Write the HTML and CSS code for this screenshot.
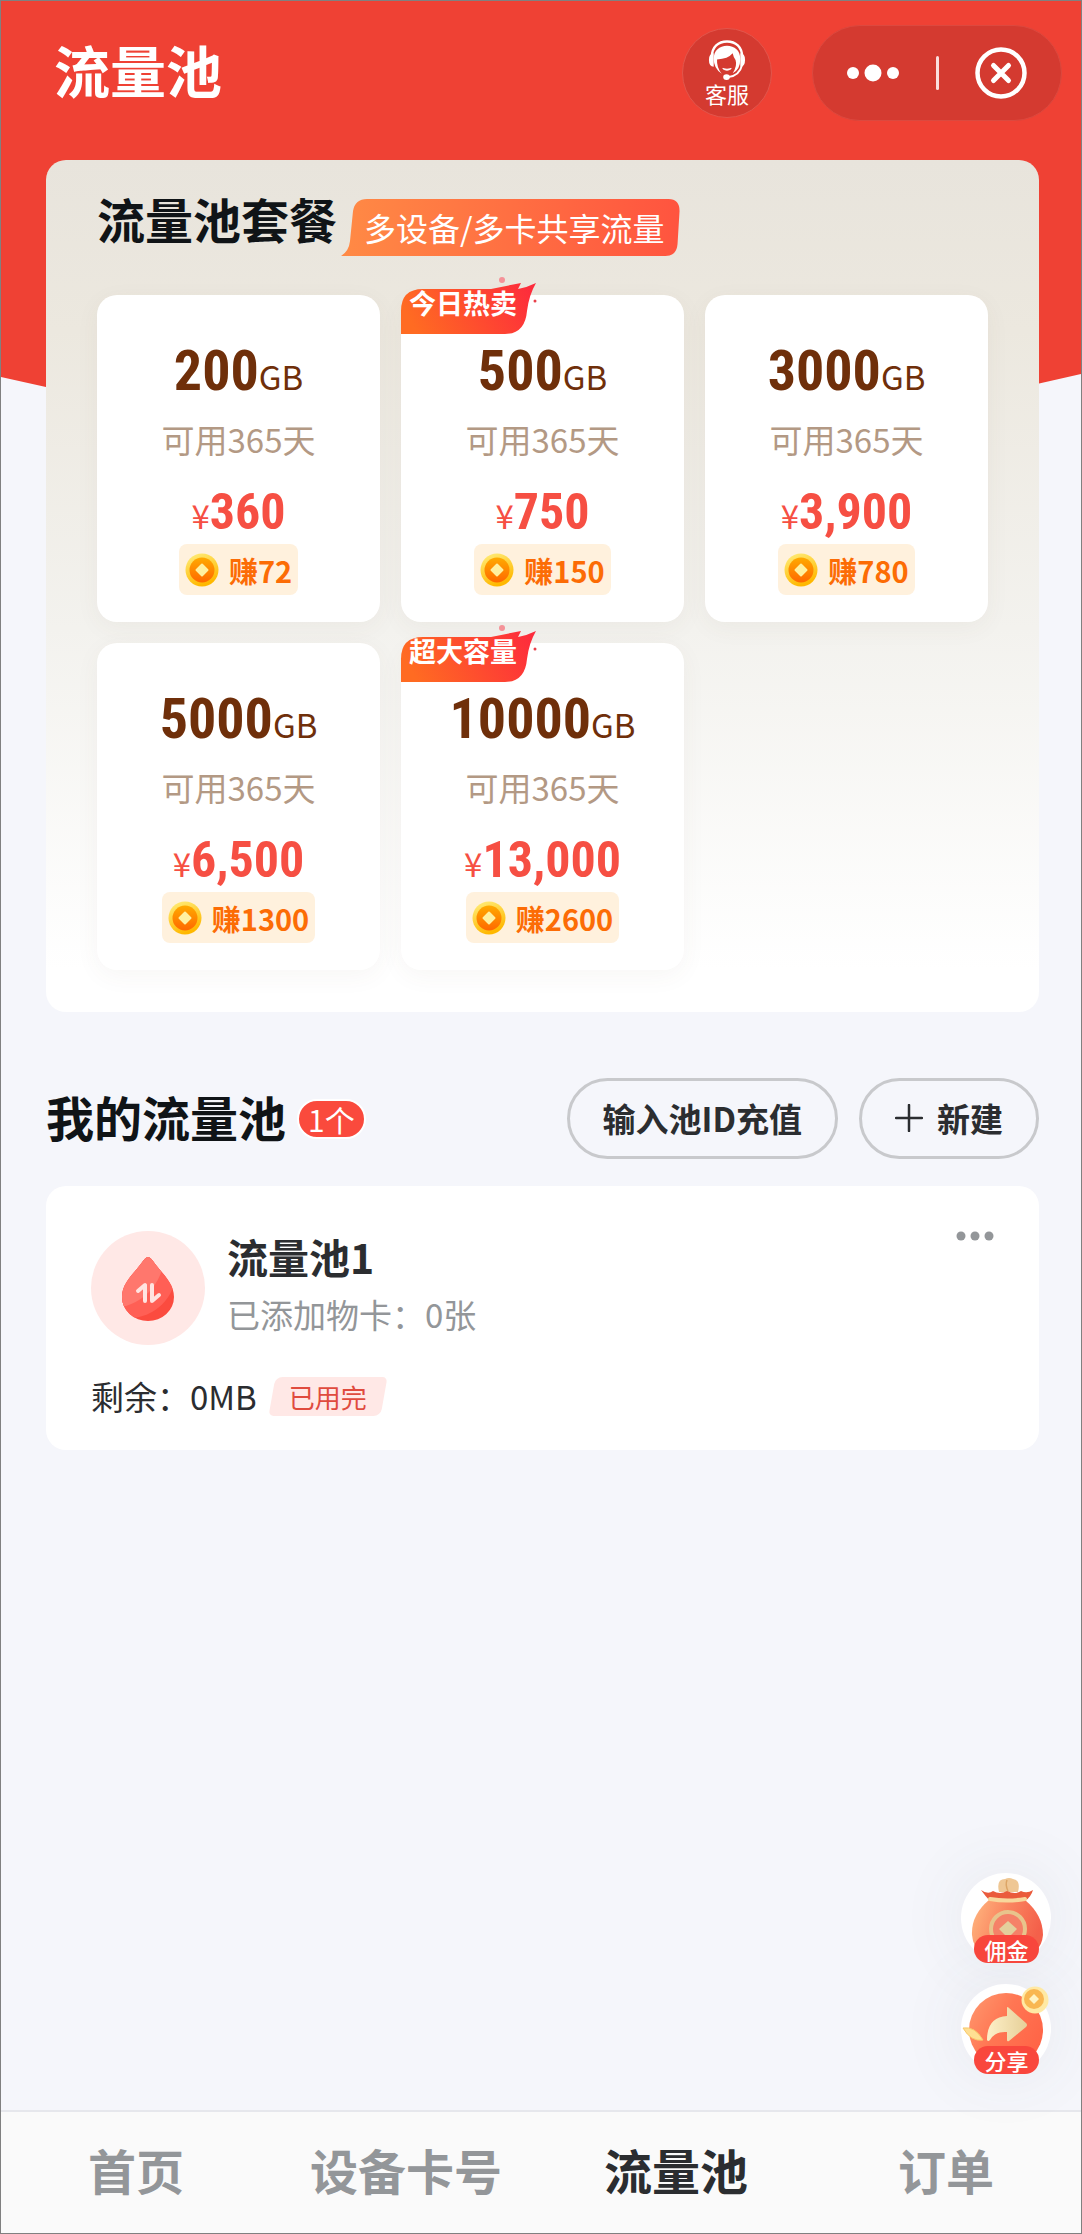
FILE: index.html
```html
<!DOCTYPE html>
<html lang="zh-CN">
<head>
<meta charset="utf-8">
<meta name="viewport" content="width=device-width, initial-scale=1">
<title>流量池</title>
<link rel="stylesheet" href="styles.css">
</head>
<body>
<svg class="defs" width="0" height="0" aria-hidden="true">
  <defs>
    <linearGradient id="coin-rim" x1="0" y1="0" x2="0.4" y2="1"><stop offset="0" stop-color="#ffef80"/><stop offset="1" stop-color="#ffb800"/></linearGradient>
    <linearGradient id="coin-face" x1="0" y1="0" x2="0" y2="1"><stop offset="0" stop-color="#ffaa00"/><stop offset="1" stop-color="#ff6800"/></linearGradient>
    <linearGradient id="flag-fill" x1="0" y1="0.4" x2="1" y2="0.2"><stop offset="0" stop-color="#ff6b22"/><stop offset="1" stop-color="#fd2b3c"/></linearGradient>
    <linearGradient id="promo-fill" x1="0" y1="0" x2="1" y2="0"><stop offset="0" stop-color="#ff8a45"/><stop offset="1" stop-color="#ff543f"/></linearGradient>
    <linearGradient id="bag-fill" x1="0" y1="0" x2="1" y2="0.3"><stop offset="0" stop-color="#ffb880"/><stop offset="0.5" stop-color="#fa8560"/><stop offset="1" stop-color="#f4604a"/></linearGradient>
    <linearGradient id="disc-fill" x1="0" y1="0" x2="1" y2="0.6"><stop offset="0" stop-color="#ff9a70"/><stop offset="0.5" stop-color="#ff7653"/><stop offset="1" stop-color="#ff6547"/></linearGradient>
    <linearGradient id="arrow-fill" x1="0" y1="0" x2="1" y2="0"><stop offset="0" stop-color="#fdf0c8"/><stop offset="1" stop-color="#e6cf98"/></linearGradient>
    <symbol id="coin" viewBox="0 0 34 34">
      <circle cx="17" cy="17" r="16.500" fill="url(#coin-rim)"/>
      <circle cx="17" cy="17" r="12.500" fill="url(#coin-face)"/>
      <path d="M17 11.500l5.500 5.500l-5.500 5.500l-5.500-5.500z" fill="#fff0a0" stroke="#fff0a0" stroke-width="2" stroke-linejoin="round"/>
    </symbol>
    <symbol id="flag" viewBox="0 0 136 58">
      <path d="M0 57V34Q0 12 22 12H90L120 6L117 12Q127 10 135 6Q128 18 126 34Q124 57 104 57Z" fill="url(#flag-fill)"/>
      <circle cx="101" cy="3" r="3" fill="#f59298"/>
      <circle cx="134" cy="24" r="1.500" fill="#e8404a"/>
    </symbol>
  </defs>
</svg>
<div class="page">
  <header class="topbar">
    <h1 class="topbar-title">流量池</h1>
    <button class="service" type="button">
      <svg class="service-icon" viewBox="0 0 40 42" aria-hidden="true">
        <path d="M4 18C4 7 11 1.500 20 1.500S36 7 36 18" fill="none" stroke="#fff" stroke-width="2.500"/>
        <path d="M6 14Q1 14 1 21Q1 28 6 28Z" fill="#fff"/>
        <path d="M34 14Q39 14 39 21Q39 28 34 28Z" fill="#fff"/>
        <path d="M36 26Q33 38 21 39" fill="none" stroke="#fff" stroke-width="2"/>
        <ellipse cx="19.500" cy="39" rx="3.500" ry="3" fill="#fff"/>
        <path d="M14.500 35.500Q6 30 6 20C6 11 12 6 20 6S34 11 34 20Q34 31 26 35Q31 27 29 21Q27 19 26 14Q21 20 9.500 20.500Q9 29 14.500 35.500Z" fill="#fff"/>
        <path d="M15.500 30Q20 33.500 24.500 30Q20 31.500 15.500 30Z" fill="#fff" stroke="#fff"/>
      </svg>
      <span>客服</span>
    </button>
    <div class="capsule">
      <button class="capsule-button" type="button" aria-label="更多">
        <svg width="52" height="18" viewBox="0 0 52 18"><g fill="#fff"><circle cx="6" cy="9" r="6"/><circle cx="26" cy="9" r="8.500"/><circle cx="46" cy="9" r="6"/></g></svg>
      </button>
      <span class="capsule-line"></span>
      <button class="capsule-button" type="button" aria-label="关闭">
        <svg width="52" height="52" viewBox="0 0 52 52" fill="none" stroke="#fff" stroke-linecap="round"><circle cx="26" cy="26" r="23.500" stroke-width="4.500"/><path d="M18.500 18.500L33.500 33.500M33.500 18.500L18.500 33.500" stroke-width="5"/></svg>
      </button>
    </div>
  </header>

  <main class="content">
    <section class="plans">
      <div class="plans-head">
        <h2 class="heading">流量池套餐</h2>
        <p class="promo">
          <svg class="promo-bg" viewBox="0 0 338 57" preserveAspectRatio="none" aria-hidden="true"><path d="M0 57Q8 52 9 42L12 12Q14 0 26 0H327Q338 0 338 12L336 45Q335 57 324 57Z" fill="url(#promo-fill)"/></svg>
          <span>多设备/多卡共享流量</span>
        </p>
      </div>
      <ul class="plan-grid">
        <li class="plan">
          <p class="plan-size">200<small>GB</small></p>
          <p class="plan-days">可用365天</p>
          <p class="plan-price"><small>¥</small>360</p>
          <p class="earn"><svg class="coin" aria-hidden="true"><use href="#coin"/></svg>赚72</p>
        </li>
        <li class="plan">
          <span class="flag"><svg class="flag-bg" aria-hidden="true"><use href="#flag"/></svg><b>今日热卖</b></span>
          <p class="plan-size">500<small>GB</small></p>
          <p class="plan-days">可用365天</p>
          <p class="plan-price"><small>¥</small>750</p>
          <p class="earn"><svg class="coin" aria-hidden="true"><use href="#coin"/></svg>赚150</p>
        </li>
        <li class="plan">
          <p class="plan-size">3000<small>GB</small></p>
          <p class="plan-days">可用365天</p>
          <p class="plan-price"><small>¥</small>3,900</p>
          <p class="earn"><svg class="coin" aria-hidden="true"><use href="#coin"/></svg>赚780</p>
        </li>
        <li class="plan">
          <p class="plan-size">5000<small>GB</small></p>
          <p class="plan-days">可用365天</p>
          <p class="plan-price"><small>¥</small>6,500</p>
          <p class="earn"><svg class="coin" aria-hidden="true"><use href="#coin"/></svg>赚1300</p>
        </li>
        <li class="plan">
          <span class="flag"><svg class="flag-bg" aria-hidden="true"><use href="#flag"/></svg><b>超大容量</b></span>
          <p class="plan-size">10000<small>GB</small></p>
          <p class="plan-days">可用365天</p>
          <p class="plan-price"><small>¥</small>13,000</p>
          <p class="earn"><svg class="coin" aria-hidden="true"><use href="#coin"/></svg>赚2600</p>
        </li>
      </ul>
    </section>

    <section class="mine">
      <div class="mine-head">
        <h2 class="heading">我的流量池</h2>
        <span class="count">1个</span>
        <div class="actions">
          <button class="pill" type="button">输入池ID充值</button>
          <button class="pill" type="button"><svg width="28" height="28" viewBox="0 0 28 28" aria-hidden="true"><path d="M14 1V27M1 14H27" stroke="#2b2d30" stroke-width="2.500" stroke-linecap="round"/></svg>新建</button>
        </div>
      </div>
      <article class="pool">
        <div class="pool-top">
          <svg class="pool-icon" viewBox="0 0 114 114" aria-hidden="true">
            <defs><clipPath id="drop"><path d="M57 26Q59 26 62 30C70 42 83 51 83 66A26 24 0 0 1 31 66C31 51 44 42 52 30Q55 26 57 26Z"/></clipPath></defs>
            <circle cx="57" cy="57" r="57" fill="#ffe8e6"/>
            <g clip-path="url(#drop)">
              <rect x="25" y="20" width="64" height="74" fill="#fb4b3f"/>
              <circle cx="38" cy="40" r="47" fill="#ff5f55"/>
              <circle cx="20" cy="24" r="53" fill="#ff776d"/>
            </g>
            <path d="M47 60L54 54V70M61 54V70L68 64" fill="none" stroke="#ffe4e1" stroke-width="4" stroke-linecap="round" stroke-linejoin="round"/>
          </svg>
          <div class="pool-text">
            <h3 class="pool-name">流量池1</h3>
            <p class="pool-cards">已添加物卡：0张</p>
          </div>
          <button class="more" type="button" aria-label="更多操作"><svg width="38" height="10" viewBox="0 0 38 10"><g fill="#939699"><circle cx="5" cy="5" r="4.500"/><circle cx="19" cy="5" r="4.500"/><circle cx="33" cy="5" r="4.500"/></g></svg></button>
        </div>
        <p class="pool-rest">剩余：0MB <span class="used">已用完</span></p>
      </article>
    </section>
  </main>

  <aside class="floats">
    <a class="float" href="#commission">
      <svg class="float-art" viewBox="0 0 90 90" aria-hidden="true">
        <path d="M38 19Q35 6 44 6Q48 4 52 6Q60 7 57 19Z" fill="#efc794"/>
        <path d="M46 7Q44 12 47 18" fill="none" stroke="#dca566" stroke-width="1.500"/>
        <path d="M28 27Q10 42 11 62Q13 86 46 86Q80 86 82 62Q82 42 64 27Z" fill="url(#bag-fill)"/>
        <path d="M20 17Q27 22 32 18Q39 22 46 18Q54 22 60 18Q66 21 72 17Q70 24 64 28H29Q25 24 20 17Z" fill="#ea5b3c"/>
        <path d="M29 26Q46 29 64 26" fill="none" stroke="#f8d79c" stroke-width="4" stroke-linecap="round"/>
        <circle cx="47" cy="56" r="17" fill="#f58168" stroke="#e8c48c" stroke-width="4"/>
        <path d="M47 48L56 56L47 65L38 56Z" fill="#e3cf9c"/>
      </svg>
      <span class="float-label">佣金</span>
    </a>
    <a class="float" href="#share">
      <svg class="float-art" viewBox="0 0 90 90" aria-hidden="true">
        <circle cx="45" cy="46" r="37" fill="url(#disc-fill)"/>
        <path d="M2 44Q14 42 22 56Q10 58 2 44Z" fill="#ffdf93" stroke="#f7c96c"/>
        <path d="M26 56Q26 33 46 32V24Q46 22 48 24L65 39Q67 41 65 43L48 57Q46 58 46 56V48Q34 47 29 56Q27 58 26 56Z" fill="url(#arrow-fill)"/>
        <circle cx="74" cy="16" r="13.500" fill="#ffe9a4"/>
        <circle cx="73" cy="15" r="10" fill="#f9b752"/>
        <path d="M73 10L78 15L73 20L68 15Z" fill="#fff3c4"/>
      </svg>
      <span class="float-label">分享</span>
    </a>
  </aside>

  <nav class="tabs">
    <a class="tab" href="#home">首页</a>
    <a class="tab" href="#device">设备卡号</a>
    <a class="tab tab-on" href="#pool" aria-current="page">流量池</a>
    <a class="tab" href="#orders">订单</a>
  </nav>
</div>
</body>
</html>
```
FILE: styles.css
```css
* { box-sizing: border-box; }
body, h1, h2, h3, p, ul { margin: 0; padding: 0; }
ul { list-style: none; }
a { color: inherit; text-decoration: none; }
button { padding: 0; border: 0; background: none; color: inherit; font: inherit; cursor: pointer; }
svg { display: block; flex: none; }
.defs { position: absolute; }

body {
  background: #f5f6fb;
  color: #2b2d30;
  font-family: "Noto Sans CJK SC", sans-serif;
  font-size: 33px;
  line-height: 48px;
}

.page {
  position: relative;
  isolation: isolate;
  display: flex;
  flex-direction: column;
  min-height: 100vh;
  border: 1px solid #808080;
}
/* red backdrop that ends in a shallow point behind the plans panel */
.page::before {
  content: "";
  position: absolute;
  inset: 0 0 auto;
  z-index: -1;
  height: 496px;
  background: #ef4134;
  clip-path: polygon(0 0, 100% 0, 100% 373px, 50% 100%, 0 376px);
}

.topbar { display: flex; align-items: center; height: 159px; padding: 0 19px 15px 53px; color: #fff; }
.topbar-title { margin-right: auto; padding-bottom: 8px; font-size: 56px; font-weight: 700; line-height: 80px; }
.service {
  display: flex;
  flex-direction: column;
  align-items: center;
  width: 90px;
  height: 90px;
  margin-right: 40px;
  padding-top: 10px;
  border: 1px solid #e2564c;
  border-radius: 50%;
  background: #d43a30;
  font-size: 22px;
  line-height: 24px;
}
.service-icon { width: 38px; height: 42px; }
.capsule {
  display: flex;
  align-items: center;
  justify-content: space-between;
  width: 250px;
  height: 96px;
  padding: 0 34px;
  border: 1px solid #dc493f;
  border-radius: 48px;
  background: #d43a30;
}
.capsule-line { width: 3px; height: 34px; border-radius: 2px; background: #fbdedc; }

.content { flex: 1; padding: 0 42px 40px 45px; }
.heading { color: #101417; font-size: 48px; font-weight: 700; line-height: 64px; }

.plans {
  padding: 26px 51px 42px;
  border-radius: 20px;
  background: linear-gradient(#e8e4dc, #ece8df 20%, #f3f2ee 55%, #fff 95%);
}
.plans-head { display: flex; align-items: flex-start; gap: 4px; height: 109px; }
.promo {
  position: relative;
  margin-top: 13px;
  padding: 0 15px 0 23px;
  color: #fff;
  font-size: 32px;
  line-height: 57px;
}
.promo-bg { position: absolute; inset: 0; z-index: 0; width: 100%; height: 100%; }
.promo span { position: relative; }

.plan-grid { display: grid; grid-template-columns: repeat(3, 1fr); gap: 21px; }
.plan {
  position: relative;
  display: flex;
  flex-direction: column;
  align-items: center;
  padding: 44px 0 27px;
  border-radius: 20px;
  background: #fff;
  box-shadow: 0 6px 24px rgba(90, 80, 60, 0.05);
}
.plan-size, .plan-price { font-family: "Roboto Condensed", Roboto, sans-serif; font-weight: 700; }
.plan-size { color: #6f2f0a; font-size: 56px; line-height: 64px; }
.plan-days { margin-top: 12px; color: #b39984; }
.plan-price { margin-top: 21px; color: #f64f43; font-size: 50px; line-height: 56px; }
.plan small { font-family: "Noto Sans CJK SC", sans-serif; font-size: 33px; font-weight: 400; line-height: 32px; }
.earn {
  display: flex;
  align-items: center;
  gap: 10px;
  height: 51px;
  margin-top: 4px;
  padding: 0 6px;
  border-radius: 8px;
  background: #fff1dd;
  color: #fc6c05;
  font-size: 29px;
  font-weight: 700;
}
.coin { width: 34px; height: 34px; }
.flag { position: absolute; top: -18px; left: 0; color: #fff; font-size: 27px; line-height: 32px; }
.flag-bg { width: 136px; height: 58px; }
.flag b { position: absolute; top: 10px; left: 8px; white-space: nowrap; }

.mine-head { display: flex; align-items: center; margin: 66px 0 27px; }
.mine-head .heading { padding-bottom: 6px; }
.count {
  margin-left: 11px;
  padding: 0 9px;
  border: 2px solid #fff;
  border-radius: 20px;
  background: #fa4a3d;
  color: #fff;
  font-size: 30px;
  line-height: 36px;
}
.actions { display: flex; gap: 21px; margin-left: auto; }
.pill {
  display: flex;
  align-items: center;
  gap: 14px;
  height: 81px;
  padding: 0 33px 2px;
  border: 3px solid #c8c9cc;
  border-radius: 41px;
  font-weight: 700;
}

.pool { padding: 45px 45px 30px; border-radius: 20px; background: #fff; }
.pool-top { display: flex; align-items: flex-start; gap: 22px; }
.pool-icon { width: 114px; height: 114px; }
.pool-name { font-size: 41px; font-weight: 700; line-height: 50px; }
.pool-cards { margin-top: 9px; color: #939699; }
.more { margin-left: auto; }
.pool-rest { display: flex; align-items: center; gap: 12px; margin-top: 27px; }
.used { position: relative; isolation: isolate; padding: 0 20px; color: #e04b3e; font-size: 26px; line-height: 39px; }
.used::before {
  content: "";
  position: absolute;
  inset: 0 3px;
  z-index: -1;
  border-radius: 7px 5px;
  background: #ffe8e6;
  transform: skewX(-10deg);
}

.floats { position: absolute; right: 30px; bottom: 159px; display: grid; gap: 21px; }
.float { position: relative; width: 90px; height: 90px; border-radius: 50%; background: #fff; box-shadow: 0 0 70px rgba(80, 85, 100, 0.09); color: #fff; }
.float-art { width: 90px; height: 90px; }
.float-label {
  position: absolute;
  bottom: 0;
  left: 13px;
  width: 65px;
  border-radius: 14px;
  background: #f9473d;
  font-size: 22px;
  font-weight: 500;
  line-height: 28px;
  text-align: center;
}

.tabs { display: flex; height: 123px; border-top: 2px solid #e6e7ec; background: #fafafa; }
.tab { flex: 1; color: #939699; font-size: 48px; font-weight: 700; line-height: 114px; text-align: center; }
.tab-on { color: #2b2d30; }
```
